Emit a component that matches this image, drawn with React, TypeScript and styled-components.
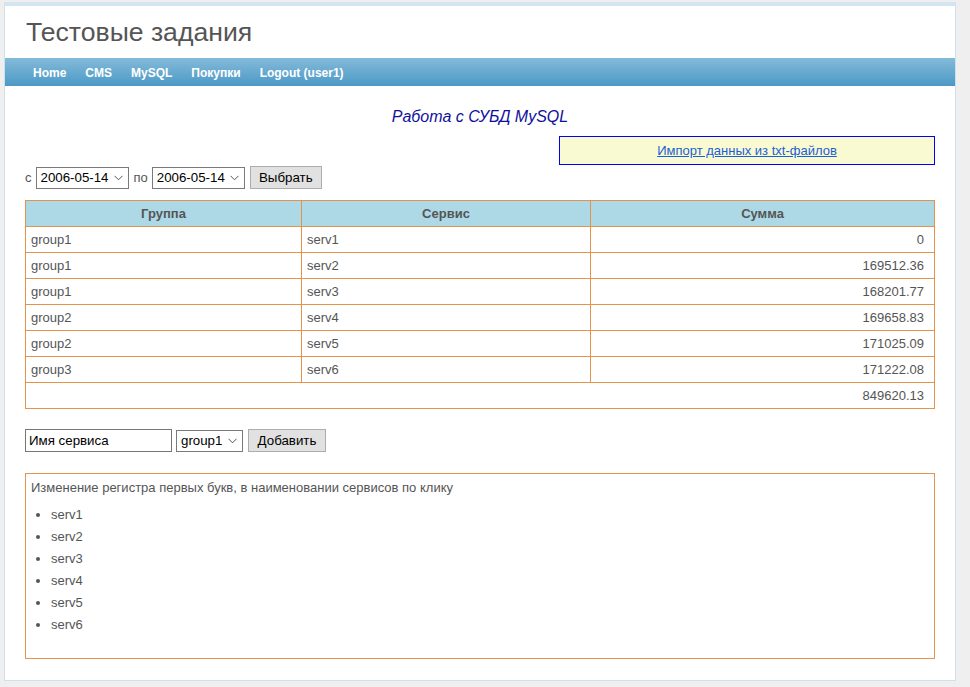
import * as React from "react";
import styled, { createGlobalStyle } from "styled-components";

const GlobalStyle = createGlobalStyle`
  html, body {
    margin: 0;
    padding: 0;
    background: #efefef;
    font-family: "Liberation Sans", Arial, sans-serif;
  }
`;

const Orange = "#e5934a";
const TextGray = "#555555";

const Frame = styled.div`
  box-sizing: border-box;
  width: 952px;
  margin: 2px 0 0 4px;
  background: #ffffff;
  border: 1px solid #cde1ed;
  border-top: 4px solid #d3e5ef;
  padding-bottom: 21px;
`;

const Header = styled.div`
  height: 52px;
  display: flex;
  align-items: center;
  padding-left: 21px;
`;

const SiteTitle = styled.h1`
  margin: 0;
  font-weight: normal;
  font-size: 26.6px;
  color: #555555;
`;

const NavBar = styled.nav`
  height: 28px;
  display: flex;
  align-items: center;
  gap: 19px;
  padding-left: 28px;
  padding-top: 1px;
  box-sizing: border-box;
  background: linear-gradient(to bottom, #84bad9 0%, #4c99c6 100%);
`;

const NavLink = styled.a`
  color: #ffffff;
  font-weight: bold;
  font-size: 12px;
  text-decoration: none;
`;

const Main = styled.div`
  padding: 0 20px;
`;

const PageTitle = styled.div`
  text-align: center;
  font-style: italic;
  font-size: 16px;
  color: #10109c;
  margin-top: 21px;
  line-height: 20px;
`;

const ImportRow = styled.div`
  display: flex;
  justify-content: flex-end;
  margin-top: 9px;
`;

const ImportBox = styled.div`
  box-sizing: border-box;
  width: 376px;
  height: 29px;
  border: 1px solid #0000ff;
  background: #fafad2;
  display: flex;
  align-items: center;
  justify-content: center;
`;

const ImportLink = styled.a`
  font-size: 13px;
  color: #1a5fd6;
  text-decoration: underline;
`;

const FormRow = styled.div<{ $top: number }>`
  display: flex;
  align-items: center;
  margin-top: ${(p) => p.$top}px;
  font-size: 13px;
  color: ${TextGray};
`;

const Label = styled.span`
  margin-right: 4px;
`;

const FakeSelect = styled.div<{ $w: number }>`
  box-sizing: border-box;
  width: ${(p) => p.$w}px;
  height: 22px;
  margin-right: 5px;
  border: 1px solid #7a7a7a;
  background: #fff;
  display: flex;
  align-items: center;
  justify-content: space-between;
  padding: 0 5px 0 4px;
  font-size: 13.3px;
  color: #000;
`;

const Chevron = () => (
  <svg width="9" height="6" viewBox="0 0 9 6">
    <path d="M0.5 0.8 L4.5 4.8 L8.5 0.8" fill="none" stroke="#555" strokeWidth="1" />
  </svg>
);

const Button = styled.button<{ $w: number }>`
  box-sizing: border-box;
  width: ${(p) => p.$w}px;
  height: 23px;
  border: 1px solid #adadad;
  background: #e1e1e1;
  font-family: "Liberation Sans", Arial, sans-serif;
  font-size: 13.3px;
  color: #000;
  padding: 0;
`;

const TextInput = styled.div`
  box-sizing: border-box;
  width: 147px;
  height: 23px;
  border: 1px solid #767676;
  margin-right: 4px;
  display: flex;
  align-items: center;
  padding-left: 3px;
  font-size: 13.3px;
  color: #000;
`;

const Table = styled.table`
  width: 100%;
  margin-top: 11px;
  border-collapse: collapse;
  font-size: 13px;
  color: ${TextGray};
`;

const Th = styled.th`
  height: 25px;
  padding: 0;
  background: #add8e6;
  border: 1px solid ${Orange};
  font-weight: bold;
`;

const Td = styled.td<{ $right?: boolean }>`
  height: 25px;
  border: 1px solid ${Orange};
  padding: 0 ${(p) => (p.$right ? "10px" : "5px")} 0 5px;
  text-align: ${(p) => (p.$right ? "right" : "left")};
`;

const ListBox = styled.div`
  box-sizing: border-box;
  margin-top: 21px;
  height: 186px;
  border: 1px solid ${Orange};
  padding: 6px 5px;
  font-size: 13px;
  color: ${TextGray};
`;

const ServiceList = styled.ul`
  margin: 9px 0 0 0;
  padding-left: 20px;
  list-style: disc;
`;

const ServiceItem = styled.li`
  line-height: 22px;
  cursor: pointer;
`;

const rows = [
  ["group1", "serv1", "0"],
  ["group1", "serv2", "169512.36"],
  ["group1", "serv3", "168201.77"],
  ["group2", "serv4", "169658.83"],
  ["group2", "serv5", "171025.09"],
  ["group3", "serv6", "171222.08"],
];

export default function App() {
  return (
    <>
      <GlobalStyle />
      <Frame>
        <Header>
          <SiteTitle>Тестовые задания</SiteTitle>
        </Header>
        <NavBar>
          <NavLink>Home</NavLink>
          <NavLink>CMS</NavLink>
          <NavLink>MySQL</NavLink>
          <NavLink>Покупки</NavLink>
          <NavLink>Logout (user1)</NavLink>
        </NavBar>
        <Main>
          <PageTitle>Работа с СУБД MySQL</PageTitle>
          <ImportRow>
            <ImportBox>
              <ImportLink href="#">Импорт данных из txt-файлов</ImportLink>
            </ImportBox>
          </ImportRow>
          <FormRow $top={1}>
            <Label>с</Label>
            <FakeSelect $w={93}>
              2006-05-14 <Chevron />
            </FakeSelect>
            <Label>по</Label>
            <FakeSelect $w={93}>
              2006-05-14 <Chevron />
            </FakeSelect>
            <Button $w={72}>Выбрать</Button>
          </FormRow>
          <Table>
            <colgroup>
              <col style={{ width: 276 }} />
              <col style={{ width: 289 }} />
              <col />
            </colgroup>
            <thead>
              <tr>
                <Th>Группа</Th>
                <Th>Сервис</Th>
                <Th>Сумма</Th>
              </tr>
            </thead>
            <tbody>
              {rows.map((r, i) => (
                <tr key={i}>
                  <Td>{r[0]}</Td>
                  <Td>{r[1]}</Td>
                  <Td $right>{r[2]}</Td>
                </tr>
              ))}
              <tr>
                <Td $right colSpan={3}>
                  849620.13
                </Td>
              </tr>
            </tbody>
          </Table>
          <FormRow $top={20}>
            <TextInput>Имя сервиса</TextInput>
            <FakeSelect $w={67}>
              group1 <Chevron />
            </FakeSelect>
            <Button $w={78}>Добавить</Button>
          </FormRow>
          <ListBox>
            Изменение регистра первых букв, в наименовании сервисов по клику
            <ServiceList>
              {rows.map((r) => (
                <ServiceItem key={r[1]}>{r[1]}</ServiceItem>
              ))}
            </ServiceList>
          </ListBox>
        </Main>
      </Frame>
    </>
  );
}
